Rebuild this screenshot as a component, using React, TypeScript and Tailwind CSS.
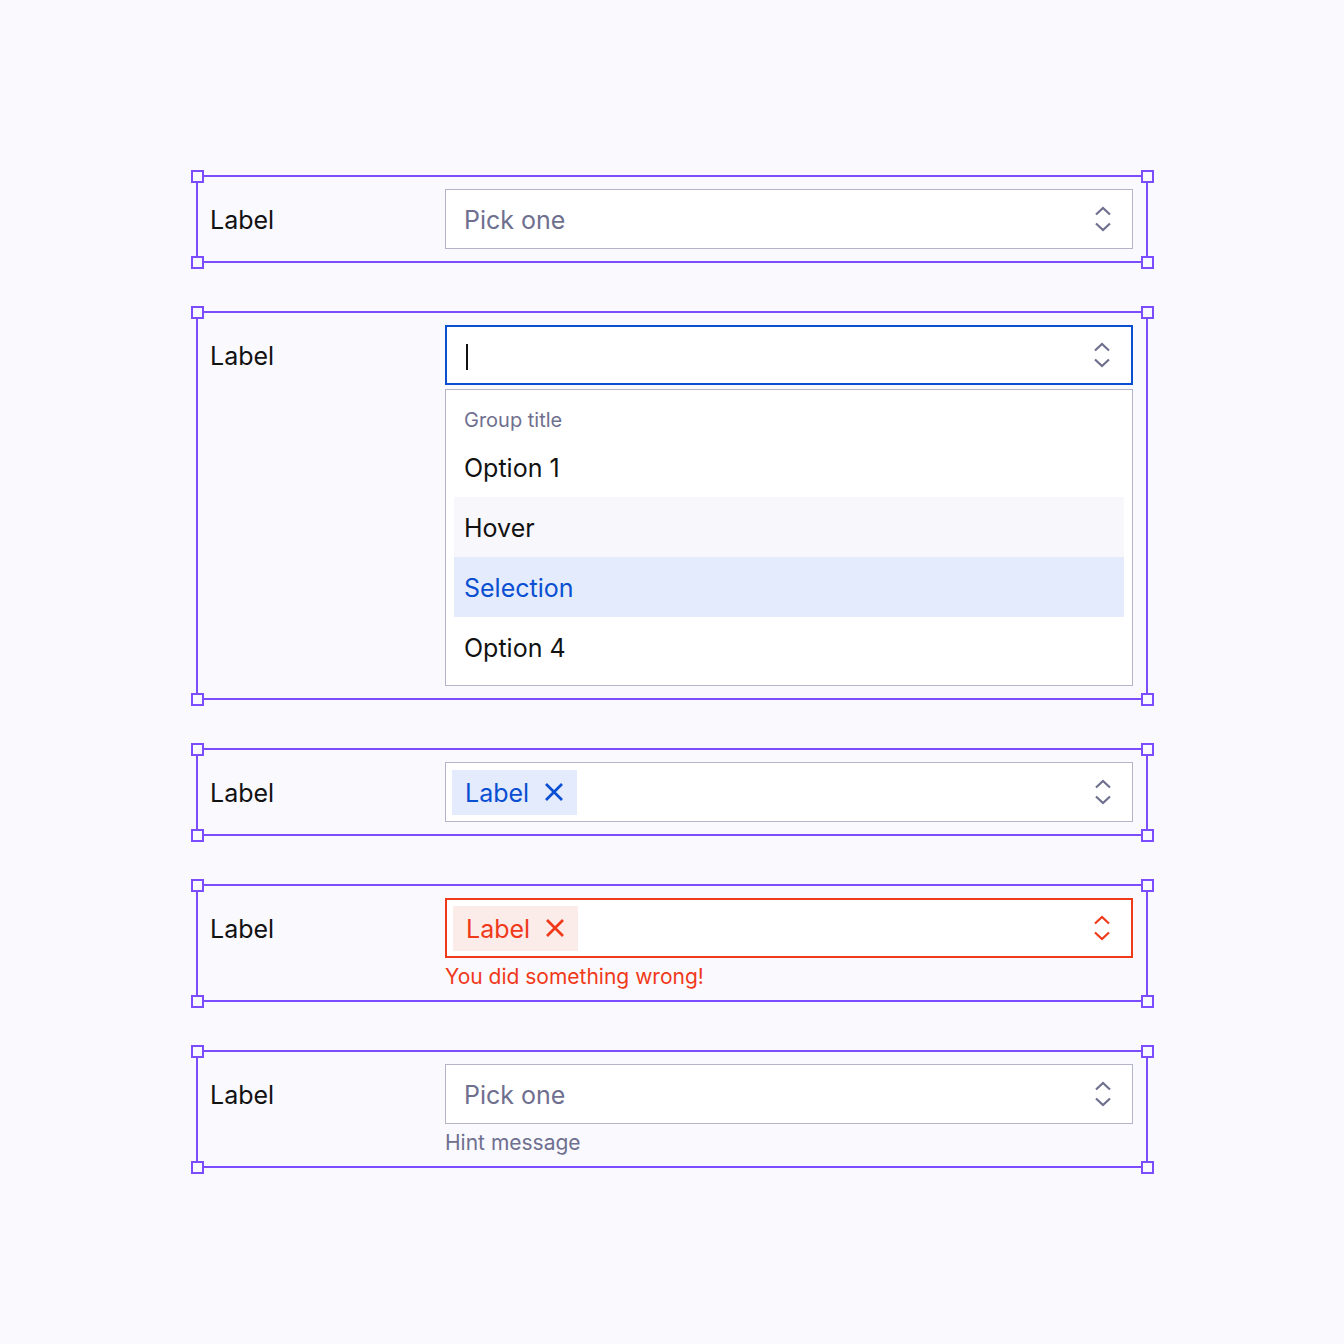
import React from 'react';

const font = { fontFamily: 'Inter, "Noto Sans", sans-serif' };

function Handle({ pos }: { pos: string }) {
	return <div className={`absolute h-[13px] w-[13px] border-2 border-[#7c4dff] bg-[#f9f9fe] ${pos}`} />;
}

function Frame({ children }: { children: React.ReactNode }) {
	return (
		<div className="relative ml-[196px] w-[952px] border-2 border-[#7c4dff] px-[12px] py-[12px]">
			<Handle pos="-left-[7.5px] -top-[7.5px]" />
			<Handle pos="-right-[7.5px] -top-[7.5px]" />
			<Handle pos="-left-[7.5px] -bottom-[7.5px]" />
			<Handle pos="-right-[7.5px] -bottom-[7.5px]" />
			<div className="flex flex-row">
				<div className="flex h-[60px] w-[235px] items-center pt-[3px] text-[25px] text-[#121212]">Label</div>
				<div className="flex w-[688px] flex-col">{children}</div>
			</div>
		</div>
	);
}

function Chevrons({ color }: { color: string }) {
	return (
		<svg width="18" height="30" viewBox="0 0 18 30" fill="none" stroke={color} strokeWidth="2.2" className="mr-[20px]">
			<path d="M2 10.5 L9 4 L16 10.5" />
			<path d="M2 19.5 L9 26 L16 19.5" />
		</svg>
	);
}

function XIcon({ color }: { color: string }) {
	return (
		<svg width="20" height="20" viewBox="0 0 20 20" fill="none" stroke={color} strokeWidth="2.7">
			<path d="M2 2 L18 18 M18 2 L2 18" />
		</svg>
	);
}

function Chip({ tone }: { tone: 'blue' | 'red' }) {
	const blue = tone === 'blue';
	return (
		<div className={`ml-[6px] flex h-[45px] items-center gap-[15px] pl-[13px] pr-[13px] ${blue ? 'bg-[#e3ebfd] text-[#0a4fd1]' : 'bg-[#fbecea] text-[#f0391a]'}`}>
			<span className="pt-[3px] text-[25px]">Label</span>
			<XIcon color={blue ? '#0a4fd1' : '#f0391a'} />
		</div>
	);
}

function Option({ text, kind }: { text: string; kind?: 'hover' | 'selected' }) {
	const cls = kind === 'hover' ? 'bg-[#f8f8fc] text-[#121212]' : kind === 'selected' ? 'bg-[#e3ebfd] text-[#0a4fd1]' : 'text-[#121212]';
	return <div className={`flex h-[60px] items-center pl-[10px] pt-[4px] text-[25px] ${cls}`}>{text}</div>;
}

export default function App() {
	return (
		<div className="min-h-[1344px] w-full bg-[#f9f9fe] pt-[175px]" style={font}>
			<div className="flex flex-col gap-[48px]">
				<Frame>
					<div className="flex h-[60px] items-center justify-between border border-[#b4b4c8] bg-white pl-[18px]">
						<span className="pt-[3px] text-[25px] text-[#6f6f8f]">Pick one</span>
						<Chevrons color="#6f6f8f" />
					</div>
				</Frame>

				<Frame>
					<div className="flex h-[60px] items-center justify-between border-2 border-[#0a4fd1] bg-white pl-[19px]">
						<span className="mt-[3px] h-[26px] w-[2px] bg-[#121212]" />
						<Chevrons color="#6f6f8f" />
					</div>
					<div className="mt-[4px] flex flex-col border border-[#b4b4c8] bg-white p-[8px]">
						<div className="flex h-[39px] items-center pl-[10px] pt-[4px] text-[20px] text-[#6f6f8f]">Group title</div>
						<Option text="Option 1" />
						<Option text="Hover" kind="hover" />
						<Option text="Selection" kind="selected" />
						<Option text="Option 4" />
					</div>
				</Frame>

				<Frame>
					<div className="flex h-[60px] items-center justify-between border border-[#b4b4c8] bg-white">
						<Chip tone="blue" />
						<Chevrons color="#6f6f8f" />
					</div>
				</Frame>

				<Frame>
					<div className="flex h-[60px] items-center justify-between border-2 border-[#f0391a] bg-white">
						<Chip tone="red" />
						<Chevrons color="#f0391a" />
					</div>
					<div className="flex h-[30px] items-center pt-[8px] text-[21px] text-[#f0391a]">You did something wrong!</div>
				</Frame>

				<Frame>
					<div className="flex h-[60px] items-center justify-between border border-[#b4b4c8] bg-white pl-[18px]">
						<span className="pt-[3px] text-[25px] text-[#6f6f8f]">Pick one</span>
						<Chevrons color="#6f6f8f" />
					</div>
					<div className="flex h-[30px] items-center pt-[8px] text-[21px] text-[#6f6f8f]">Hint message</div>
				</Frame>
			</div>
		</div>
	);
}
